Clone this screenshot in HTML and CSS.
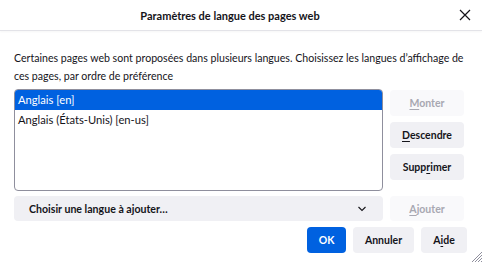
FILE: index.html
```html
<!DOCTYPE html>
<html lang="fr">
<head>
    <meta charset="UTF-8">
    <title>Paramètres de langue des pages web</title>
    <link rel="stylesheet" href="styles.css">
</head>
<body>
    <div class="dialog">
        <div class="titlebar">
            <span class="title">Paramètres de langue des pages web</span>
            <button class="close" aria-label="Fermer">
                <svg width="12" height="12" viewBox="0 0 12 12"><path d="M1 1 L11 11 M11 1 L1 11" stroke="#15141a" stroke-width="1.2" fill="none"/></svg>
            </button>
        </div>

        <div class="content">
            <p class="desc">Certaines pages web sont proposées dans plusieurs langues. Choisissez les langues d’affichage de ces pages, par ordre de préférence</p>

            <div class="listRow">
                <div class="langList">
                    <div class="item selected">Anglais [en]</div>
                    <div class="item">Anglais (États-Unis) [en-us]</div>
                </div>
                <div class="sideButtons">
                    <button class="btn" disabled><u>M</u>onter</button>
                    <button class="btn"><u>D</u>escendre</button>
                    <button class="btn">Supp<u>r</u>imer</button>
                </div>
            </div>

            <div class="addRow">
                <div class="select">
                    <span>Choisir une langue à ajouter…</span>
                    <svg width="10" height="6" viewBox="0 0 10 6"><path d="M1.5 1 L5 4.5 L8.5 1" stroke="#15141a" stroke-width="1.1" fill="none"/></svg>
                </div>
                <button class="btn" disabled><u>A</u>jouter</button>
            </div>

            <div class="footer">
                <button class="btn primary">OK</button>
                <button class="btn cancel">Annuler</button>
                <button class="btn help">A<u>i</u>de</button>
            </div>
        </div>
        <div class="grip">
            <svg width="12" height="12" viewBox="0 0 12 12"><path d="M12 2 L2 12 M12 5 L5 12 M12 8 L8 12 M12 11 L11 12" stroke="#8f8f9d" stroke-width="1" fill="none"/></svg>
        </div>
    </div>
</body>
</html>
```

FILE: styles.css
```css
/* Base */
body {
    margin: 0;
    background-color: #fff;
    font-family: Lato, "Noto Sans", sans-serif;
    font-size: 10.6px;
    color: #15141a;
}

.dialog {
    width: 482px;
    height: 262px;
    position: relative;
    overflow: hidden;
}

/* Title bar */
.titlebar {
    height: 30px;
    display: flex;
    align-items: center;
    padding-left: 5px;
    border-bottom: 1px solid #e3e3e8;
    box-shadow: 0 1px 2px rgba(0, 0, 0, 0.04);
}

.title {
    flex: 1;
    text-align: center;
    font-weight: 700;
    font-size: 11px;
}

.close {
    margin-right: 7px;
    width: 20px;
    height: 20px;
    padding: 0;
    border: none;
    background: none;
    display: flex;
    align-items: center;
    justify-content: center;
}

/* Content */
.content {
    padding: 0 14px 0 14px;
}

.desc {
    margin: 18px 0 4px 0;
    line-height: 18px;
}

.listRow {
    display: flex;
    gap: 7px;
}

.langList {
    width: 367px;
    height: 100px;
    border: 1px solid #8f8f9d;
    border-radius: 4px;
    overflow: hidden;
}

.item {
    height: 20px;
    line-height: 20px;
    padding: 0 3px;
    font-size: 11.2px;
}

.item.selected {
    background-color: #0061e0;
    color: #fff;
}

.sideButtons {
    display: flex;
    flex-direction: column;
    gap: 6px;
    padding-top: 1px;
}

/* Buttons */
.btn {
    width: 74px;
    height: 26px;
    padding: 0;
    border: none;
    border-radius: 4px;
    background-color: #f0f0f4;
    color: #15141a;
    font-family: Lato, "Noto Sans", sans-serif;
    font-size: 10.5px;
    font-weight: 700;
}

.btn:disabled {
    background-color: #f9f9fb;
    color: #a8a8b2;
}

.btn u {
    text-underline-offset: 2px;
}

.btn.primary {
    background-color: #0061e0;
    color: #fff;
}

/* Add row */
.addRow {
    display: flex;
    gap: 7px;
    margin-top: 5px;
}

.select {
    width: 369px;
    height: 25px;
    box-sizing: border-box;
    padding: 0 16px 0 15px;
    background-color: #f0f0f4;
    border-radius: 4px;
    display: flex;
    align-items: center;
    justify-content: space-between;
    font-weight: 700;
}

.addRow .btn {
    height: 25px;
}

/* Footer */
.footer {
    display: flex;
    justify-content: flex-end;
    gap: 7px;
    margin-top: 6px;
    padding-right: 1px;
}

.footer .primary {
    width: 39px;
}

.footer .cancel {
    width: 61px;
}

.footer .help {
    width: 46px;
}

.grip {
    position: absolute;
    right: 0;
    bottom: 0;
    width: 12px;
    height: 12px;
}
```
